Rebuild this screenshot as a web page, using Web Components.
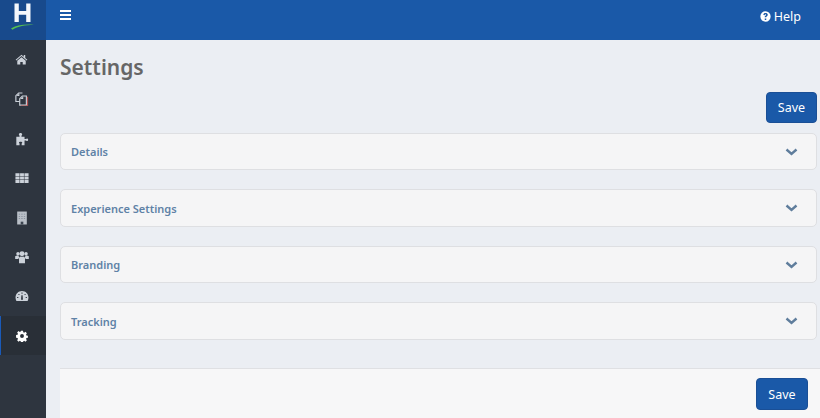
<!DOCTYPE html>
<html>
<head>
<meta charset="utf-8">
<title>Settings</title>
<style>
  html, body { margin: 0; height: 100%; overflow: hidden; }
  body { font-family: "Noto Sans", "Open Sans", sans-serif; background: #ebeef3; }
</style>
</head>
<body>
<app-shell>
  <nav-item icon="home"></nav-item>
  <nav-item icon="copy"></nav-item>
  <nav-item icon="puzzle"></nav-item>
  <nav-item icon="grid"></nav-item>
  <nav-item icon="building"></nav-item>
  <nav-item icon="users"></nav-item>
  <nav-item icon="gauge"></nav-item>
  <nav-item icon="gear" active></nav-item>
  <settings-page slot="main" heading="Settings">
    <accordion-panel>Details</accordion-panel>
    <accordion-panel>Experience Settings</accordion-panel>
    <accordion-panel>Branding</accordion-panel>
    <accordion-panel>Tracking</accordion-panel>
  </settings-page>
</app-shell>

<script>
// icon shapes, all on a 16x16 box
const ICONS = {
  home: '<path d="M8 2.200 .8 8.200l.8.9L8 3.800l6.400 5.300.8-.9-2.600-2.200V2.600h-1.800v2z"/><path d="M2.800 9.600 8 5.200l5.200 4.400v4.600H9.500v-3.200h-3v3.200H2.800z"/>',
  copy: '<g fill="none" stroke="currentColor" stroke-width="1.300"><path d="M8.500 1.200H4.200L1 4.200v6.600h4.400"/><path d="M13 4.600H8.400L5.400 7.600v7.400H13z"/></g><path d="M13.700 5.400h1.300V16H6.500v-.6h7.200z" fill="#b5504f"/><path d="M1.600 4.600h3.400V1.800zM6 8h3.400V5.200z"/>',
  puzzle: '<path d="M1.500 5.500h3.700V4.200c-.6-.4-.8-.9-.8-1.300C4.400 1.900 5.200 1.200 6.300 1.200s1.900.7 1.900 1.700c0 .4-.2.9-.8 1.300v1.300h3.500V8h1.700c.4-.4.700-.6 1.100-.6.900 0 1.300.8 1.300 1.500s-.4 1.500-1.300 1.500c-.4 0-.7-.2-1.100-.6h-1.700V15H7.600v-1.800c.5-.4.700-.8.700-1.100 0-.7-.9-1.100-1.900-1.100s-1.900.4-1.900 1.100c0 .3.200.7.700 1.100V15H1.500z"/>',
  grid: '<path d="M.5 2.500h4.700v3.300H.5zM5.800 2.500h4.400v3.300H5.800zM10.800 2.500h4.700v3.300h-4.700zM.5 6.400h4.700v3.300H.5zM5.800 6.400h4.400v3.300H5.800zM10.800 6.400h4.700v3.300h-4.700zM.5 10.300h4.700v3.300H.5zM5.800 10.300h4.400v3.300H5.800zM10.800 10.300h4.700v3.300h-4.700z"/>',
  building: '<path fill="#b9bfc7" d="M2.500.6h11v14.800h-11z"/><path fill="#7d8794" d="M4.300 3h1.500v1H4.300zM7.200 3h1.500v1H7.200zM10.100 3h1.500v1h-1.500zM4.300 5.600h1.500v1H4.300zM7.200 5.600h1.500v1H7.200zM10.100 5.600h1.500v1h-1.500zM4.300 8.200h1.500v1H4.300zM7.200 8.200h1.500v1H7.200zM10.100 8.200h1.500v1h-1.500z"/><path fill="#3c4450" d="M6.500 12.200h3v3.200h-3z"/>',
  users: '<circle cx="3.400" cy="4.400" r="2"/><circle cx="12.600" cy="4.400" r="2"/><circle cx="8" cy="4.200" r="2.800"/><path d="M.2 7.200c.8-.8 1.900-1 3.400-1 .4 1 1 1.600 1.700 2.100-.8.400-1.200 1-1.500 1.900H.2zM15.800 7.200c-.8-.8-1.900-1-3.400-1-.4 1-1 1.600-1.700 2.100.8.400 1.200 1 1.500 1.900h3.600z"/><path d="M4.600 9.200c.5-1 1.200-1.600 2-1.800.9.500 1.900.5 2.800 0 .8.200 1.500.8 2 1.800V15H4.600z"/>',
  gauge: '<path fill-rule="evenodd" d="M8 2.400c4.200 0 7.400 3.300 7.400 7.400 0 1.400-.3 2.600-1 3.800H1.600c-.7-1.200-1-2.400-1-3.800C.6 5.700 3.800 2.400 8 2.400zM7.400 4v1.500h1.200V4zM3.900 5.600v1.300h1.200V5.600zm7 0v1.300h1.200V5.600zM2.400 9v1.200h1.400V9zm9.800 0v1.200h1.400V9zM6.900 12.400h2.200l-.4-5.200h-1.400z"/>',
  gear: '<path fill-rule="evenodd" d="M6.700 1h2.600l.4 2 1.200.5 1.700-1.100 1.900 1.900-1.100 1.700.5 1.200 2 .4v2.700l-2 .4-.5 1.200 1.100 1.700-1.900 1.900-1.700-1.100-1.200.5-.4 2H6.700l-.4-2-1.200-.5-1.700 1.100-1.900-1.900 1.100-1.700-.5-1.200-2-.4V6.600l2-.4.5-1.200-1.100-1.700 1.900-1.900 1.700 1.100 1.200-.5zM8 5.400a2.600 2.600 0 1 0 0 5.200 2.600 2.600 0 0 0 0-5.200z"/>'
};

class NavItem extends HTMLElement {
  connectedCallback() {
    const active = this.hasAttribute('active');
    const name = this.getAttribute('icon');
    const size = name === 'gear' ? 12 : name === 'home' ? 13 : 14;
    this.attachShadow({ mode: 'open' });
    this.shadowRoot.innerHTML = `
      <style>
        :host {
          display: flex;
          align-items: center;
          justify-content: center;
          height: 39.4px;
          box-sizing: border-box;
          padding-right: 3px;
          color: ${active ? '#fff' : '#ccd2da'};
          background: ${active ? '#292f37' : 'transparent'};
          border-left: ${active ? '1px solid #1a5ab8' : '0'};
        }
        svg { width: ${size}px; height: ${size}px; fill: currentColor; display: block; }
      </style>
      <svg viewBox="0 0 16 16">${ICONS[name]}</svg>
    `;
  }
}

class AppShell extends HTMLElement {
  connectedCallback() {
    this.attachShadow({ mode: 'open' });
    this.shadowRoot.innerHTML = `
      <style>
        :host { display: grid; grid-template-columns: 46px 1fr; grid-template-rows: 40px 1fr; height: 100vh; }
        .logo {
          background: #184a8c;
          display: flex;
          justify-content: center;
        }
        .logo svg { width: 26px; height: 30px; margin-top: 2px; }
        .bar {
          background: #1a59a8;
          color: #fff;
          display: flex;
          justify-content: space-between;
          align-items: flex-start;
          padding: 0 19px 0 14px;
        }
        .bars { display: block; width: 11px; height: 10px; margin-top: 10px; fill: #fff; }
        .help {
          display: flex;
          align-items: center;
          gap: 3px;
          font-size: 12.5px;
          line-height: 17px;
          margin-top: 8px;
        }
        .help svg { width: 11px; height: 11px; }
        .side { background: #2e353f; padding-top: 0.3px; overflow: hidden; }
        main { overflow: hidden; min-width: 0; }
      </style>
      <div class="logo">
        <svg viewBox="0 0 26 30">
          <path fill="#f4f7fb" d="M4.500 1.500h4.300v7.500h7.400V1.500h4.300v18.500h-4.300v-7.300H8.800v7.300H4.500z"/>
          <path fill="#56c04f" d="M1 26.500c5-3.200 13-4.500 23-3.700-9 .3-16 1.500-21.500 5z"/>
        </svg>
      </div>
      <div class="bar">
        <svg class="bars" viewBox="0 0 11 10"><path d="M0 0h11v2H0zM0 4h11v2H0zM0 8h11v2H0z"/></svg>
        <div class="help">
          <svg viewBox="0 0 16 16">
            <path fill="#fff" fill-rule="evenodd" d="M8 .5a7.500 7.500 0 1 1 0 15 7.500 7.500 0 0 1 0-15zM6.900 11v2h2.200v-2zM8 3C6.200 3 5 4 4.800 5.600l2 .4c.1-.8.500-1.200 1.100-1.200.600 0 1 .3 1 .800 0 .500-.4.800-1 1.200-.8.500-1 1.100-1 1.900v.5h2.200v-.3c0-.4.200-.6.700-.9.900-.6 1.500-1.300 1.500-2.500C11.300 4 9.900 3 8 3z"/>
          </svg>
          <span>Help</span>
        </div>
      </div>
      <div class="side"><slot></slot></div>
      <main><slot name="main"></slot></main>
    `;
  }
}

class SaveButton extends HTMLElement {
  connectedCallback() {
    const wide = this.hasAttribute('wide');
    this.attachShadow({ mode: 'open' });
    this.shadowRoot.innerHTML = `
      <style>
        :host { display: block; }
        button {
          display: block;
          box-sizing: border-box;
          width: ${wide ? 52 : 51}px;
          height: ${wide ? 32 : 31}px;
          padding: 0;
          background: #1a59a8;
          border: 1px solid #1a4f96;
          border-radius: 4px;
          color: #fff;
          font: 12.5px "Noto Sans", "Open Sans", sans-serif;
        }
      </style>
      <button type="button">Save</button>
    `;
  }
}

class AccordionPanel extends HTMLElement {
  connectedCallback() {
    this.attachShadow({ mode: 'open' });
    this.shadowRoot.innerHTML = `
      <style>
        :host {
          display: flex;
          align-items: center;
          justify-content: space-between;
          box-sizing: border-box;
          height: 37.5px;
          padding: 0 18.500px 0 10px;
          background: #f5f5f6;
          border: 1px solid #dedfe2;
          border-radius: 5px;
          color: #5f82a6;
          font-size: 11px;
          font-weight: 600;
        }
        svg { display: block; width: 13px; height: 8px; fill: none; stroke: #5f7d9c; stroke-width: 2.400; }
      </style>
      <span><slot></slot></span>
      <svg viewBox="0 0 13 8"><path d="M1.500 1.500l5 4.500 5-4.500"/></svg>
    `;
  }
}

class SettingsPage extends HTMLElement {
  connectedCallback() {
    this.attachShadow({ mode: 'open' });
    this.shadowRoot.innerHTML = `
      <style>
        :host { display: flex; flex-direction: column; height: 378px; padding-left: 14px; }
        h1 {
          margin: 0;
          height: 52px;
          padding-top: 10px;
          box-sizing: border-box;
          font-size: 21px;
          line-height: 34px;
          font-weight: 600;
          color: #666;
        }
        .top { display: flex; justify-content: flex-end; padding-right: 3px; }
        .list { display: flex; flex-direction: column; gap: 19px; margin-top: 9.900px; padding-right: 3px; }
        footer {
          margin-top: auto;
          height: 50px;
          box-sizing: border-box;
          display: flex;
          justify-content: flex-end;
          padding: 9px 12px 0 0;
          background: #f7f7f8;
          border-top: 1px solid #dfe0e3;
        }
      </style>
      <h1>${this.getAttribute('heading')}</h1>
      <div class="top"><save-button></save-button></div>
      <div class="list"><slot></slot></div>
      <footer><save-button wide></save-button></footer>
    `;
  }
}

customElements.define('nav-item', NavItem);
customElements.define('app-shell', AppShell);
customElements.define('save-button', SaveButton);
customElements.define('accordion-panel', AccordionPanel);
customElements.define('settings-page', SettingsPage);
</script>
</body>
</html>
